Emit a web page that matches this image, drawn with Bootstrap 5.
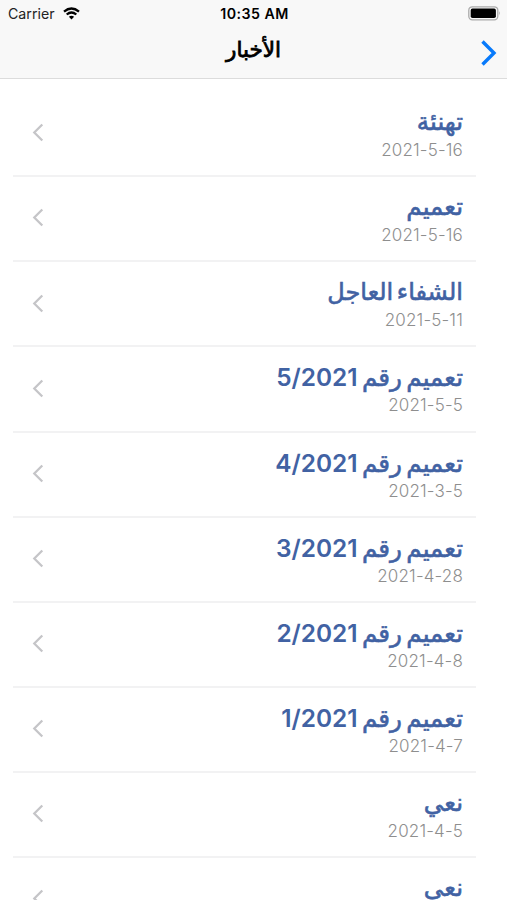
<!DOCTYPE html>
<html lang="ar" dir="rtl">
<head>
<meta charset="utf-8">
<meta name="viewport" content="width=device-width, initial-scale=1">
<title>الأخبار</title>
<link href="https://cdn.jsdelivr.net/npm/bootstrap@5.3.0/dist/css/bootstrap.min.css" rel="stylesheet">
<style>
body { font-family: Inter, "DejaVu Sans", sans-serif; }
.phone { height: 900px; }
.topbar { height: 79px; background: #f8f8f8; border-bottom: 1px solid #dcdcdc; color: #000; }
.status { height: 27px; font-size: 14.2px; line-height: 27px; padding: 0 6px 0 8px; }
.status .side { flex: 1 1 0; }
.clock { font-weight: 600; letter-spacing: .45px; }
.carrier { color: #222; }
.page-title { font: 400 21.5px/30px "DejaVu Sans", sans-serif; -webkit-text-stroke: .8px #000; margin-top: -6px; }
.titlebar { height: 51px; padding: 0 10px; }
.titlebar .side { flex: 1 1 0; }
.news { padding: 13.2px 31px 0 13px; }
.news-row { height: 85.08px; padding: 14px 13px 0 19px; border-bottom: 2px solid #f2f2f3; }
.news-title { font: 400 24.6px/32px "DejaVu Sans", sans-serif; -webkit-text-stroke: .6px #4162a3; color: #4162a3; height: 33px; word-spacing: -3.5px; }
.news-title.long { font-size: 24px; word-spacing: -4px; }
.news-title bdi { font: 600 24.4px/32px Inter, sans-serif; -webkit-text-stroke: 0; }
.news-date { font-size: 17px; line-height: 20px; color: #8e8e8e; font-weight: 300; text-align: right; letter-spacing: .15px; margin-top: 1px; }
.chev { margin-top: 17.2px; }
</style>
</head>
<body class="bg-white">
<div class="phone overflow-hidden">
<header class="topbar">
  <div class="status d-flex" dir="ltr">
    <div class="side d-flex align-items-center gap-2"><span class="carrier ps-0">Carrier</span>
      <svg width="17" height="13" viewBox="0 0 17 13" fill="none" stroke="#000" stroke-width="2.3"><path d="M1 4.6Q8.5-1.6 16 4.6M3.7 7.5Q8.5 3.4 13.3 7.5"/><path d="M8.5 12.6 5.9 9.8Q8.5 7.7 11.1 9.8Z" fill="#000" stroke="none"/></svg>
    </div>
    <div class="clock">10:35 AM</div>
    <div class="side d-flex justify-content-end align-items-center">
      <svg width="33" height="15" viewBox="0 0 33 15"><rect x=".8" y=".8" width="29" height="13" rx="3.5" fill="#f8f8f8" stroke="#aaa" stroke-width="1.3"/><rect x="2.7" y="2.6" width="25.2" height="9.4" rx="1.8"/><path d="M31.2 5q1.5 2.3 0 4.6z" fill="#999"/></svg>
    </div>
  </div>
  <div class="titlebar d-flex align-items-center">
    <div class="side"><svg width="16" height="26" viewBox="0 0 16 26" fill="none" stroke="#087afb" stroke-width="3.4"><path d="M1.5 1.5 13 13 1.5 24.5"/></svg></div>
    <div class="page-title">الأخبار</div>
    <div class="side"></div>
  </div>
</header>
<main class="news">
  <div class="news-row d-flex justify-content-between"><div><div class="news-title">تهنئة</div><div class="news-date" dir="ltr">2021-5-16</div></div><svg class="chev" width="12" height="19" viewBox="0 0 12 19" fill="none" stroke="#c5c5c8" stroke-width="2.3"><path d="M10.3 1.5 2.3 9.5 10.3 17.5"/></svg></div>
  <div class="news-row d-flex justify-content-between"><div><div class="news-title">تعميم</div><div class="news-date" dir="ltr">2021-5-16</div></div><svg class="chev" width="12" height="19" viewBox="0 0 12 19" fill="none" stroke="#c5c5c8" stroke-width="2.3"><path d="M10.3 1.5 2.3 9.5 10.3 17.5"/></svg></div>
  <div class="news-row d-flex justify-content-between"><div><div class="news-title long">الشفاء العاجل</div><div class="news-date" dir="ltr">2021-5-11</div></div><svg class="chev" width="12" height="19" viewBox="0 0 12 19" fill="none" stroke="#c5c5c8" stroke-width="2.3"><path d="M10.3 1.5 2.3 9.5 10.3 17.5"/></svg></div>
  <div class="news-row d-flex justify-content-between"><div><div class="news-title">تعميم رقم <bdi dir="ltr">5/2021</bdi></div><div class="news-date" dir="ltr">2021-5-5</div></div><svg class="chev" width="12" height="19" viewBox="0 0 12 19" fill="none" stroke="#c5c5c8" stroke-width="2.3"><path d="M10.3 1.5 2.3 9.5 10.3 17.5"/></svg></div>
  <div class="news-row d-flex justify-content-between"><div><div class="news-title">تعميم رقم <bdi dir="ltr">4/2021</bdi></div><div class="news-date" dir="ltr">2021-3-5</div></div><svg class="chev" width="12" height="19" viewBox="0 0 12 19" fill="none" stroke="#c5c5c8" stroke-width="2.3"><path d="M10.3 1.5 2.3 9.5 10.3 17.5"/></svg></div>
  <div class="news-row d-flex justify-content-between"><div><div class="news-title">تعميم رقم <bdi dir="ltr">3/2021</bdi></div><div class="news-date" dir="ltr">2021-4-28</div></div><svg class="chev" width="12" height="19" viewBox="0 0 12 19" fill="none" stroke="#c5c5c8" stroke-width="2.3"><path d="M10.3 1.5 2.3 9.5 10.3 17.5"/></svg></div>
  <div class="news-row d-flex justify-content-between"><div><div class="news-title">تعميم رقم <bdi dir="ltr">2/2021</bdi></div><div class="news-date" dir="ltr">2021-4-8</div></div><svg class="chev" width="12" height="19" viewBox="0 0 12 19" fill="none" stroke="#c5c5c8" stroke-width="2.3"><path d="M10.3 1.5 2.3 9.5 10.3 17.5"/></svg></div>
  <div class="news-row d-flex justify-content-between"><div><div class="news-title">تعميم رقم <bdi dir="ltr">1/2021</bdi></div><div class="news-date" dir="ltr">2021-4-7</div></div><svg class="chev" width="12" height="19" viewBox="0 0 12 19" fill="none" stroke="#c5c5c8" stroke-width="2.3"><path d="M10.3 1.5 2.3 9.5 10.3 17.5"/></svg></div>
  <div class="news-row d-flex justify-content-between"><div><div class="news-title">نعي</div><div class="news-date" dir="ltr">2021-4-5</div></div><svg class="chev" width="12" height="19" viewBox="0 0 12 19" fill="none" stroke="#c5c5c8" stroke-width="2.3"><path d="M10.3 1.5 2.3 9.5 10.3 17.5"/></svg></div>
  <div class="news-row d-flex justify-content-between"><div><div class="news-title">نعي</div></div><svg class="chev" width="12" height="19" viewBox="0 0 12 19" fill="none" stroke="#c5c5c8" stroke-width="2.3"><path d="M10.3 1.5 2.3 9.5 10.3 17.5"/></svg></div>
</main>
</div>
<script src="https://cdn.jsdelivr.net/npm/bootstrap@5.3.0/dist/js/bootstrap.bundle.min.js"></script>
</body>
</html>
